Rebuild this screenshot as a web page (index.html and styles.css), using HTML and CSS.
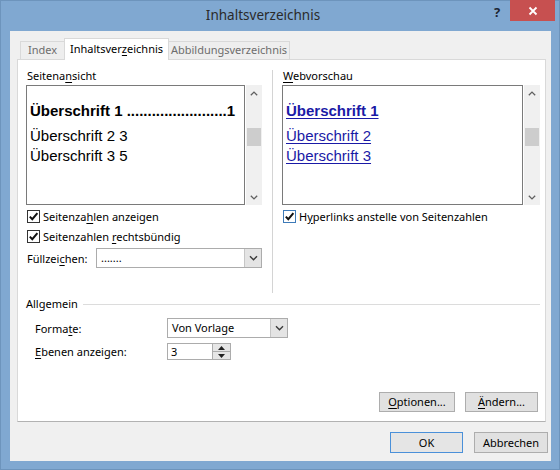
FILE: index.html
```html
<!DOCTYPE html>
<html lang="de">
<head>
<meta charset="utf-8">
<title>Inhaltsverzeichnis</title>
<link rel="stylesheet" href="styles.css">
</head>
<body>
<div class="window">
  <div class="titlebar">
    <div class="title">Inhaltsverzeichnis</div>
    <div class="help">?</div>
    <div class="close">
      <svg width="10" height="10" viewBox="0 0 10 10"><path d="M1.5 1.5 L8.5 8.5 M8.5 1.5 L1.5 8.5" stroke="#fff" stroke-width="1.8" fill="none"/></svg>
    </div>
  </div>
  <div class="client">
    <div class="tabs">
      <div class="tab tab-index">Index</div>
      <div class="tab tab-toc active">Inhaltsver<u>z</u>eichnis</div>
      <div class="tab tab-fig">Abbildungsverzeichnis</div>
    </div>
    <div class="panel">
      <div class="cols">
        <div class="col col-left">
          <div class="label">Seitena<u>n</u>sicht</div>
          <div class="listwrap">
            <div class="preview preview-left">
              <div class="h1">Überschrift 1 ........................1</div>
              <div class="h2">Überschrift 2 3</div>
              <div class="h3">Überschrift 3 5</div>
            </div>
            <div class="vscroll">
              <div class="arrow"><svg width="8" height="5" viewBox="0 0 8 5"><path d="M0.8 4.3 L4 1.1 L7.2 4.3" stroke="#606060" stroke-width="1.3" fill="none"/></svg></div>
              <div class="thumb"></div>
              <div class="spacer"></div>
              <div class="arrow"><svg width="8" height="5" viewBox="0 0 8 5"><path d="M0.8 0.7 L4 3.9 L7.2 0.7" stroke="#606060" stroke-width="1.3" fill="none"/></svg></div>
            </div>
          </div>
          <div class="check check-first">
            <span class="box"><svg width="11" height="11" viewBox="0 0 11 11"><path d="M1.8 5.6 L4.3 8.2 L9.4 2.2" stroke="#111" stroke-width="2" fill="none"/></svg></span>
            <span>Seitenza<u>h</u>len anzeigen</span>
          </div>
          <div class="check">
            <span class="box"><svg width="11" height="11" viewBox="0 0 11 11"><path d="M1.8 5.6 L4.3 8.2 L9.4 2.2" stroke="#111" stroke-width="2" fill="none"/></svg></span>
            <span>Seitenzahlen <u>r</u>echtsbündig</span>
          </div>
          <div class="field">
            <span class="field-label">Füllzei<u>c</u>hen:</span>
            <div class="combo combo-fill">
              <span class="combo-text">.......</span>
              <span class="combo-btn"><svg width="9" height="6" viewBox="0 0 9 6"><path d="M1 1.2 L4.5 4.7 L8 1.2" stroke="#3a3a3a" stroke-width="1.4" fill="none"/></svg></span>
            </div>
          </div>
        </div>
        <div class="sep"></div>
        <div class="col col-right">
          <div class="label"><u>W</u>ebvorschau</div>
          <div class="listwrap">
            <div class="preview preview-right">
              <div class="h1"><span class="link">Überschrift 1</span></div>
              <div class="h2"><span class="link">Überschrift 2</span></div>
              <div class="h3"><span class="link">Überschrift 3</span></div>
            </div>
            <div class="vscroll">
              <div class="arrow"><svg width="8" height="5" viewBox="0 0 8 5"><path d="M0.8 4.3 L4 1.1 L7.2 4.3" stroke="#606060" stroke-width="1.3" fill="none"/></svg></div>
              <div class="thumb"></div>
              <div class="spacer"></div>
              <div class="arrow"><svg width="8" height="5" viewBox="0 0 8 5"><path d="M0.8 0.7 L4 3.9 L7.2 0.7" stroke="#606060" stroke-width="1.3" fill="none"/></svg></div>
            </div>
          </div>
          <div class="check check-first">
            <span class="box box-focus"><svg width="11" height="11" viewBox="0 0 11 11"><path d="M1.8 5.6 L4.3 8.2 L9.4 2.2" stroke="#111" stroke-width="2" fill="none"/></svg></span>
            <span>H<u>y</u>perlinks anstelle von Seitenzahlen</span>
          </div>
        </div>
      </div>
      <div class="group">
        <div class="group-head"><span>Allgemein</span><span class="group-line"></span></div>
        <div class="form-row form-row-first">
          <span class="form-label">Forma<u>t</u>e:</span>
          <div class="combo combo-format">
            <span class="combo-text">Von Vorlage</span>
            <span class="combo-btn"><svg width="9" height="6" viewBox="0 0 9 6"><path d="M1 1.2 L4.5 4.7 L8 1.2" stroke="#3a3a3a" stroke-width="1.4" fill="none"/></svg></span>
          </div>
        </div>
        <div class="form-row form-row-second">
          <span class="form-label"><u>E</u>benen anzeigen:</span>
          <div class="spin">
            <span class="spin-text">3</span>
            <span class="spin-btns">
              <span class="spin-up"><svg width="7" height="4" viewBox="0 0 7 4"><path d="M0 4 L3.5 0 L7 4 Z" fill="#222"/></svg></span>
              <span class="spin-down"><svg width="7" height="4" viewBox="0 0 7 4"><path d="M0 0 L3.5 4 L7 0 Z" fill="#222"/></svg></span>
            </span>
          </div>
        </div>
      </div>
      <div class="actions">
        <div class="btn btn-options"><u>O</u>ptionen...</div>
        <div class="btn btn-change"><u>Ä</u>ndern...</div>
      </div>
    </div>
    <div class="footer">
      <div class="btn btn-ok default">OK</div>
      <div class="btn btn-cancel">Abbrechen</div>
    </div>
  </div>
</div>
</body>
</html>
```
FILE: styles.css
```css
* { box-sizing: border-box; }
html, body { margin: 0; padding: 0; }
body {
  width: 560px;
  height: 470px;
  overflow: hidden;
  font-family: "Noto Sans", "DejaVu Sans", sans-serif;
  font-size: 11px;
  color: #000;
  background: #80a8d1;
}
u { text-decoration-thickness: 1px; text-underline-offset: 2px; }

.window {
  width: 560px;
  height: 470px;
  background: #80a8d1;
  border: 1px solid #6d94bc;
  display: flex;
  flex-direction: column;
}

/* title bar */
.titlebar {
  height: 30px;
  display: flex;
  align-items: flex-start;
  flex: none;
}
.title {
  flex: 1;
  padding-left: 38px;
  text-align: center;
  font-size: 13.5px;
  line-height: 28px;
  color: #2a2a2a;
}
.help {
  width: 20px;
  margin-right: 3px;
  text-align: center;
  font-size: 13px;
  font-weight: bold;
  line-height: 22px;
  color: #1c2533;
}
.close {
  width: 45px;
  height: 21px;
  margin-top: -1px;
  margin-right: 4px;
  background: #c75050;
  display: flex;
  align-items: center;
  justify-content: center;
}

/* client */
.client {
  flex: 1;
  margin: 0 8px 8px 9px;
  background: #f0f0f0;
  padding: 7px 3px 8px 7px;
  display: flex;
  flex-direction: column;
}

.tabs {
  display: flex;
  align-items: flex-end;
  height: 21px;
  margin-left: 3px;
  position: relative;
  z-index: 1;
}
.tab {
  height: 18px;
  border: 1px solid #d9d9d9;
  border-bottom: none;
  background: #eeeeee;
  color: #6d6d6d;
  text-align: center;
  line-height: 16px;
}
.tab-index { width: 45px; }
.tab-toc { width: 105px; margin-left: -1px; }
.tab-fig { width: 122px; margin-left: -1px; }
.tab.active {
  height: 22px;
  margin-bottom: -1px;
  background: #fff;
  color: #000;
  line-height: 20px;
}

.panel {
  height: 363px;
  margin-right: 2px;
  border: 1px solid #d9d9d9;
  border-bottom-color: #b2b2b2;
  background: #fff;
  padding: 8px 5px 9px 8px;
  display: flex;
  flex-direction: column;
}

.cols {
  display: flex;
  height: 225px;
}
.col { flex: none; }
.col-left { width: 236px; }
.col-right { width: 258px; }
.sep {
  width: 1px;
  margin: 2px 9px 0 10px;
  background: #d4d4d4;
}

.label {
  height: 16px;
  line-height: 16px;
  margin-bottom: 1px;
  padding-left: 1px;
}

.listwrap {
  display: flex;
  height: 120px;
}
.preview {
  border: 1px solid #7a7a7a;
  padding: 14px 6px 0 3px;
  font-family: "Liberation Sans", Arial, sans-serif;
  font-size: 15px;
  white-space: nowrap;
}
.preview-left { width: 219px; }
.preview-right { width: 241px; }
.preview .h1 { font-weight: bold; line-height: 22px; }
.preview .h2 { margin-top: 4px; line-height: 20px; }
.preview .h3 { line-height: 20px; }
.link {
  color: #1a1aa6;
  text-decoration: underline;
  text-decoration-thickness: 1px;
  text-underline-offset: 2px;
}

.vscroll {
  width: 16px;
  margin-left: 1px;
  background: #f0f0f0;
  display: flex;
  flex-direction: column;
}
.arrow {
  height: 16px;
  display: flex;
  align-items: center;
  justify-content: center;
}
.thumb {
  height: 18px;
  margin: 27px 1px 0 1px;
  background: #cdcdcd;
}
.spacer { flex: 1; }

.check {
  display: flex;
  align-items: center;
  height: 20px;
  gap: 3px;
  padding-left: 1px;
  white-space: nowrap;
}
.check-first { margin-top: 1px; }
.box {
  width: 13px;
  height: 13px;
  border: 1px solid #333;
  background: #fff;
  display: flex;
  align-items: center;
  justify-content: center;
  flex: none;
}
.box-focus { border-color: #3d7ab8; }

.field {
  display: flex;
  align-items: center;
  height: 20px;
  margin-top: 2px;
}
.field-label {
  width: 70px;
  padding-left: 1px;
}
.combo {
  height: 20px;
  display: flex;
  border: 1px solid #acacac;
  background: #fff;
}
.combo-fill { width: 166px; }
.combo-format { width: 121px; }
.combo-text {
  flex: 1;
  padding-left: 4px;
  line-height: 18px;
}
.combo-btn {
  width: 17px;
  background: #e4e4e4;
  border-left: 1px solid #c6c6c6;
  display: flex;
  align-items: center;
  justify-content: center;
}

.group { margin-top: 3px; }
.group-head {
  display: flex;
  align-items: center;
  height: 16px;
  line-height: 16px;
}
.group-line {
  flex: 1;
  height: 1px;
  margin-left: 5px;
  background: #dcdcdc;
}
.form-row {
  display: flex;
  align-items: center;
  padding-left: 9px;
}
.form-row-first { margin-top: 6px; height: 20px; }
.form-row-second { margin-top: 5px; height: 17px; }
.form-label { width: 132px; }

.spin {
  width: 64px;
  height: 17px;
  display: flex;
  border: 1px solid #acacac;
  background: #fff;
}
.spin-text {
  flex: 1;
  padding-left: 3px;
  line-height: 15px;
}
.spin-btns {
  width: 18px;
  display: flex;
  flex-direction: column;
  border-left: 1px solid #acacac;
}
.spin-up, .spin-down {
  flex: 1;
  background: #e6e6e6;
  display: flex;
  align-items: center;
  justify-content: center;
}
.spin-up { border-bottom: 1px solid #acacac; }

.actions {
  margin-top: auto;
  margin-right: 2px;
  display: flex;
  justify-content: flex-end;
  gap: 10px;
}
.btn {
  height: 20px;
  line-height: 18px;
  border: 1px solid #adadad;
  background: #e1e1e1;
  text-align: center;
}
.btn-options { width: 76px; }
.btn-change { width: 73px; }

.footer {
  margin-top: 10px;
  display: flex;
  justify-content: flex-end;
  gap: 11px;
}
.footer .btn { height: 21px; line-height: 19px; }
.btn-ok { width: 73px; }
.btn-cancel { width: 74px; }
.btn.default {
  border-color: #4a90d9;
  background: #e5e5e5;
}
```
